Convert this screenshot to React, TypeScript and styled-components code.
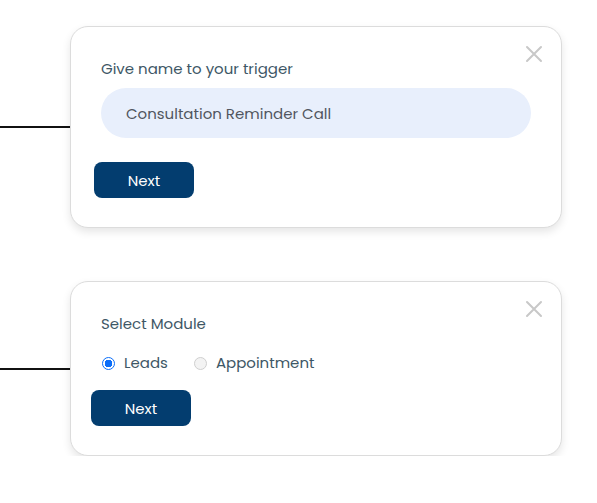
import React from "react";
import styled, { createGlobalStyle } from "styled-components";

const Global = createGlobalStyle`
  html, body { margin: 0; padding: 0; background: #ffffff; }
  body { font-family: Poppins, Inter, "Open Sans", sans-serif; }
`;

const Page = styled.div`
  display: flex;
  flex-direction: column;
  gap: 53px;
  padding-top: 26px;
  width: 597px;
`;

const Row = styled.div`
  display: flex;
  align-items: center;
`;

const Connector = styled.div`
  flex: 0 0 70px;
  height: 2px;
  background: #111;
`;

const Card = styled.div<{ $h: number }>`
  position: relative;
  box-sizing: border-box;
  width: 492px;
  height: ${(p) => p.$h}px;
  border: 1px solid #dcdcdc;
  border-radius: 18px;
  background: #fff;
  box-shadow: 0 4px 8px rgba(0, 0, 0, 0.1);
  padding: 31px 30px 0 30px;
  display: flex;
  flex-direction: column;
`;

const Close = styled.button`
  position: absolute;
  top: 18px;
  right: 18px;
  width: 18px;
  height: 18px;
  padding: 0;
  border: none;
  background: none;
  cursor: pointer;
  display: flex;
`;

const Label = styled.div`
  font-size: 15px;
  line-height: 22px;
  color: #3e5766;
`;

const Input = styled.input`
  margin-top: 8px;
  box-sizing: border-box;
  width: 430px;
  height: 50px;
  border: none;
  border-radius: 25px;
  background: #e8effc;
  padding: 0 25px;
  font-family: inherit;
  font-size: 15px;
  color: #51565f;
  outline: none;
`;

const Button = styled.button<{ $top: number; $shift: number }>`
  margin-top: ${(p) => p.$top}px;
  margin-left: ${(p) => p.$shift}px;
  width: 100px;
  height: 36px;
  border: none;
  border-radius: 8px;
  background: #033d6f;
  color: #fff;
  font-family: inherit;
  font-size: 15px;
  cursor: pointer;
`;

const Radios = styled.div`
  margin-top: 17px;
  display: flex;
  align-items: center;
  gap: 25px;
`;

const Option = styled.label`
  display: flex;
  align-items: center;
  gap: 9px;
  font-size: 15px;
  line-height: 22px;
  color: #3e5766;
  cursor: pointer;
`;

const Radio = styled.input`
  appearance: none;
  margin: 0 0 0 1px;
  box-sizing: border-box;
  width: 13px;
  height: 13px;
  border-radius: 50%;
  border: 1px solid #cfcfcf;
  background: #f3f3f3;
  &:checked {
    border: 1px solid #0b6ef9;
    background: radial-gradient(circle, #0b6ef9 0 3.6px, #fff 4px);
  }
`;

const CloseIcon = () => (
  <svg width="18" height="18" viewBox="0 0 18 18">
    <path d="M2 2 L16 16 M16 2 L2 16" stroke="#c8c8c8" strokeWidth="2" strokeLinecap="round" />
  </svg>
);

export default function App() {
  return (
    <>
      <Global />
      <Page>
        <Row>
          <Connector />
          <Card $h={202}>
            <Close aria-label="close"><CloseIcon /></Close>
            <Label>Give name to your trigger</Label>
            <Input defaultValue="Consultation Reminder Call" />
            <Button $top={24} $shift={-7}>Next</Button>
          </Card>
        </Row>
        <Row>
          <Connector />
          <Card $h={175}>
            <Close aria-label="close"><CloseIcon /></Close>
            <Label>Select Module</Label>
            <Radios>
              <Option>
                <Radio type="radio" name="module" defaultChecked />
                Leads
              </Option>
              <Option>
                <Radio type="radio" name="module" />
                Appointment
              </Option>
            </Radios>
            <Button $top={16} $shift={-10}>Next</Button>
          </Card>
        </Row>
      </Page>
    </>
  );
}
